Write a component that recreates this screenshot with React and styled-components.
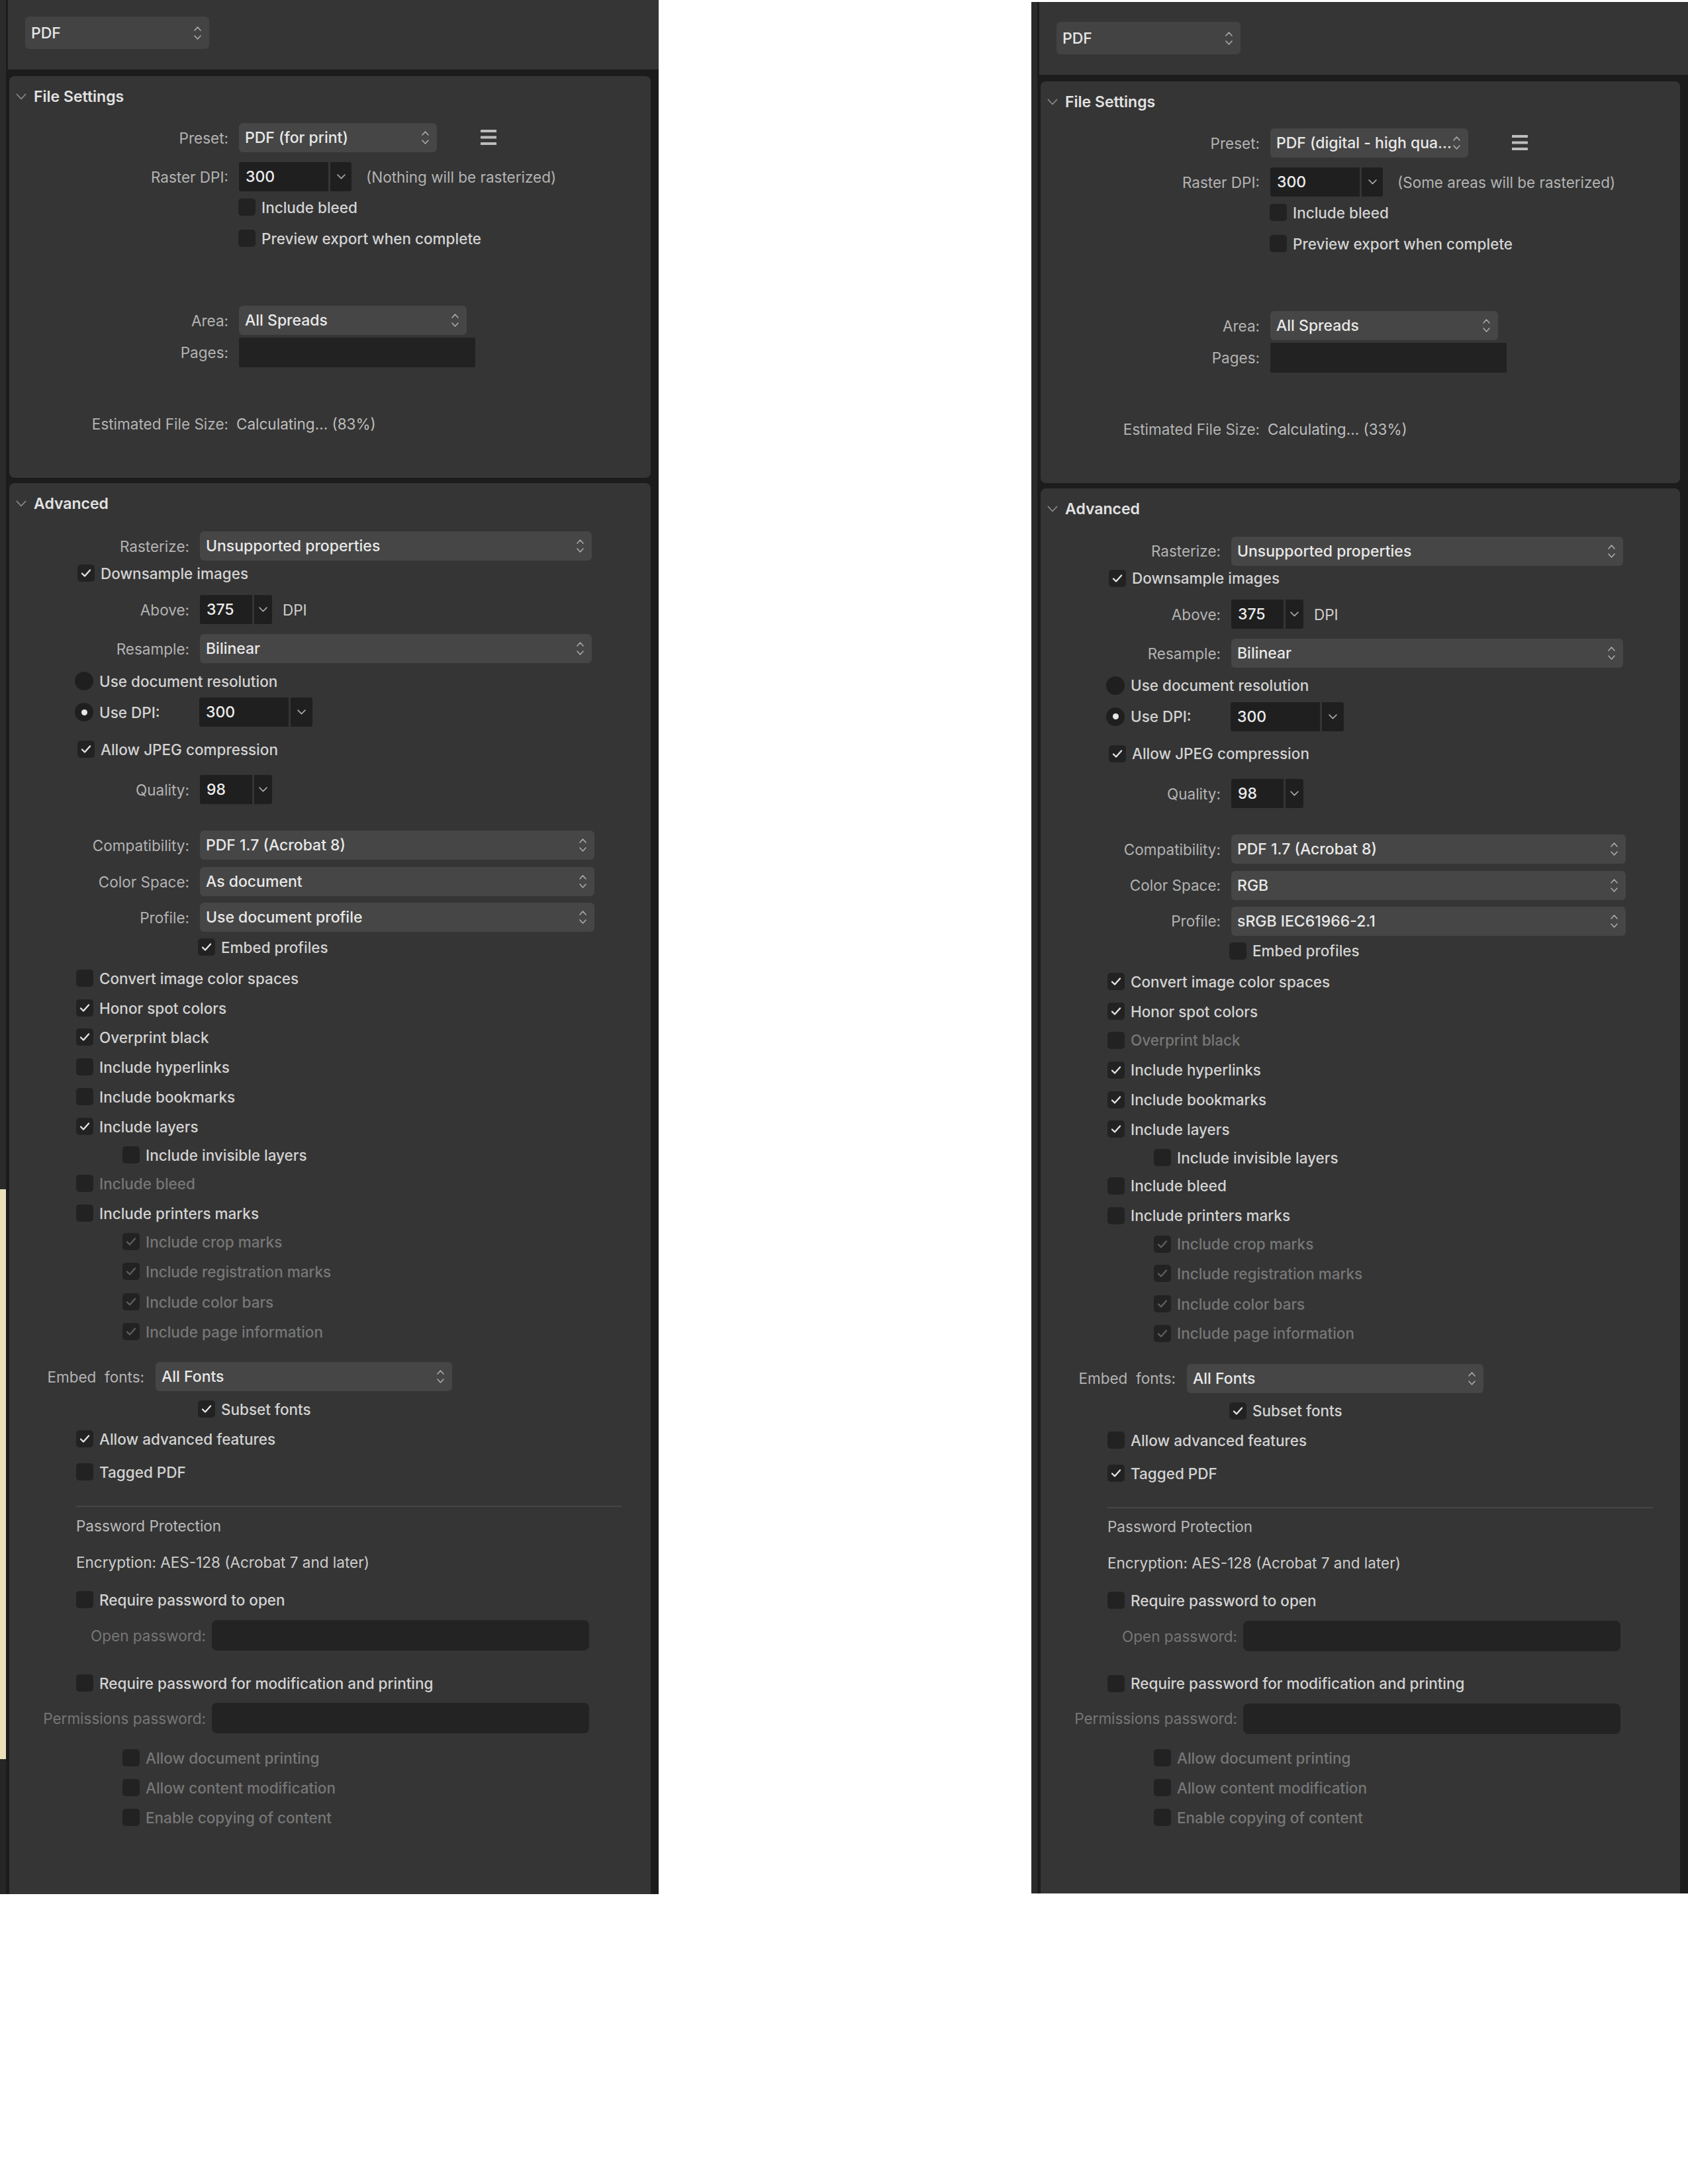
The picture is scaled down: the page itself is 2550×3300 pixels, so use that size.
import React from 'react';
import styled, { createGlobalStyle } from 'styled-components';

const GlobalStyle = createGlobalStyle`
  html, body { margin: 0; padding: 0; background: #ffffff; }
  body { font-family: Inter, "Noto Sans", "Liberation Sans", sans-serif; -webkit-font-smoothing: antialiased; }
  * { box-sizing: border-box; }
`;

const Page = styled.div`
  width: 2550px;
  height: 3300px;
  display: flex;
  justify-content: space-between;
  align-items: flex-start;
  overflow: hidden;
`;

const Panel = styled.div`
  width: ${p => p.$w}px;
  height: ${p => p.$h}px;
  margin-top: ${p => p.$top}px;
  display: flex;
  flex-shrink: 0;
`;

const Strip = styled.div`
  width: 9px;
  flex-shrink: 0;
  background: ${p => p.$bg};
`;

const Body = styled.div`
  flex: 1;
  min-width: 0;
  display: flex;
  flex-direction: column;
  background: #1c1c1c;
  padding-left: 3px;
`;

const Header = styled.div`
  height: ${p => p.$h}px;
  flex-shrink: 0;
  background: #353535;
  padding: ${p => p.$pt}px 0 0 26px;
`;

const FormatSelect = styled.div`
  width: 278px;
  height: 49px;
  border-radius: 6px;
  background: #434343;
  display: flex;
  align-items: center;
  justify-content: space-between;
  padding: 0 11px 0 9px;
  font-size: 23px;
  font-weight: 500;
  color: #e6e6e6;
`;

const Card = styled.section`
  margin: ${p => p.$mt}px 12px 0 2px;
  background: #353535;
  border-radius: ${p => (p.$open ? '8px 8px 0 0' : '8px')};
  display: flex;
  flex-direction: column;
  flex-shrink: 0;
  ${p => (p.$h ? `height: ${p.$h}px;` : 'flex: 1;')}
  overflow: hidden;
`;

const SectionHead = styled.div`
  height: 62px;
  flex-shrink: 0;
  display: flex;
  align-items: center;
  gap: 11px;
  padding-left: 10px;
  font-size: 23px;
  font-weight: 600;
  color: #e2e2e2;
`;

const Row = styled.div`
  height: 40px;
  flex-shrink: 0;
  margin-top: ${p => p.$mt}px;
  padding-left: ${p => p.$indent || 0}px;
  display: flex;
  align-items: center;
  gap: ${p => (p.$gap !== undefined ? p.$gap : 16)}px;
`;

const Label = styled.span`
  width: ${p => p.$w}px;
  flex-shrink: 0;
  text-align: right;
  white-space: pre;
  font-size: 22.5px;
  color: ${p => (p.$disabled ? '#767676' : '#b3b3b3')};
`;

const Value = styled.span`
  font-size: 22.5px;
  color: ${p => p.$color || '#c4c4c4'};
  font-weight: ${p => p.$weight || 400};
  white-space: pre;
`;

const CheckText = styled.span`
  font-size: 22.5px;
  font-weight: 500;
  white-space: nowrap;
  color: ${p => (p.$disabled ? '#777777' : '#d3d3d3')};
`;

const RadioText = styled(CheckText)`
  width: ${p => p.$w}px;
  flex-shrink: 0;
`;

const Box = styled.span`
  width: 26px;
  height: 26px;
  flex-shrink: 0;
  border-radius: 5px;
  background: #222222;
  display: flex;
  align-items: center;
  justify-content: center;
`;

const RadioDot = styled.span`
  width: 28px;
  height: 28px;
  flex-shrink: 0;
  border-radius: 50%;
  background: #1f1f1f;
  display: flex;
  align-items: center;
  justify-content: center;
  &::after {
    content: '';
    width: 9px;
    height: 9px;
    border-radius: 50%;
    background: ${p => (p.$on ? '#e8e8e8' : 'transparent')};
  }
`;

const SelectBox = styled.div`
  width: ${p => p.$w}px;
  height: 44px;
  flex-shrink: 0;
  border-radius: 6px;
  background: #464646;
  display: flex;
  align-items: center;
  justify-content: space-between;
  padding: 0 11px 0 9px;
  font-size: 23px;
  font-weight: 500;
  color: #e8e8e8;
  white-space: nowrap;
`;

const NumBox = styled.div`
  width: ${p => p.$w}px;
  height: 44px;
  flex-shrink: 0;
  display: flex;
  gap: 3px;
`;

const NumText = styled.div`
  flex: 1;
  background: #1f1f1f;
  border-radius: 3px 0 0 3px;
  display: flex;
  align-items: center;
  padding-left: 10px;
  font-size: 23px;
  font-weight: 500;
  color: #ececec;
`;

const NumArrow = styled.div`
  width: ${p => p.$w}px;
  background: #1f1f1f;
  border-radius: 0 3px 3px 0;
  display: flex;
  align-items: center;
  justify-content: center;
`;

const TextField = styled.div`
  width: ${p => p.$w}px;
  height: ${p => p.$h || 45}px;
  flex-shrink: 0;
  background: ${p => p.$bg || '#222222'};
  border-radius: ${p => p.$r || 2}px;
`;

const MenuButton = styled.span`
  margin-left: 50px;
  display: flex;
  align-items: center;
`;

const Divider = styled.div`
  height: 2px;
  flex-shrink: 0;
  margin: ${p => p.$mt}px 0 0 101px;
  width: 824px;
  background: #464646;
`;

const Stepper = () => (
  <svg width="13" height="26" viewBox="0 0 13 26" fill="none" stroke="#ababab" strokeWidth="1.6" strokeLinecap="round" strokeLinejoin="round">
    <path d="M2 9 L6.5 4 L11 9" />
    <path d="M2 17 L6.5 22 L11 17" />
  </svg>
);

const DownChevron = ({ size = 12 }) => (
  <svg width={size} height={size * 0.6} viewBox="0 0 12 7" fill="none" stroke="#a8a8a8" strokeWidth="1.5" strokeLinecap="round" strokeLinejoin="round">
    <path d="M1 1 L6 6 L11 1" />
  </svg>
);

const SectionChevron = () => (
  <svg width="16" height="10" viewBox="0 0 16 10" fill="none" stroke="#8a8a8a" strokeWidth="1.8" strokeLinecap="round" strokeLinejoin="round">
    <path d="M1.5 1.5 L8 8.5 L14.5 1.5" />
  </svg>
);

const MenuIcon = () => (
  <svg width="24" height="24" viewBox="0 0 24 24" fill="#bdbdbd">
    <rect x="0" y="0" width="24" height="4" rx="0.5" />
    <rect x="0" y="9.5" width="24" height="4" rx="0.5" />
    <rect x="0" y="19" width="24" height="4" rx="0.5" />
  </svg>
);

const Check = ({ checked, disabled }) => (
  <Box>
    {checked && (
      <svg width="16" height="14" viewBox="0 0 16 14" fill="none" stroke={disabled ? '#5e5e5e' : '#e4e4e4'} strokeWidth="2.4" strokeLinecap="round" strokeLinejoin="round">
        <path d="M2 7.5 L6 11.5 L14 2.5" />
      </svg>
    )}
  </Box>
);

const Select = ({ w, children }) => (
  <SelectBox $w={w}>
    <span>{children}</span>
    <Stepper />
  </SelectBox>
);

const NumField = ({ w, aw, value }) => (
  <NumBox $w={w}>
    <NumText>{value}</NumText>
    <NumArrow $w={aw}>
      <DownChevron size={13} />
    </NumArrow>
  </NumBox>
);

const FieldRow = ({ mt, w, label, gap, disabled, children }) => (
  <Row $mt={mt} $gap={gap}>
    <Label $w={w} $disabled={disabled}>{label}</Label>
    {children}
  </Row>
);

const CheckRow = ({ mt, indent, checked, disabled, children }) => (
  <Row $mt={mt} $indent={indent} $gap={9}>
    <Check checked={checked} disabled={disabled} />
    <CheckText $disabled={disabled}>{children}</CheckText>
  </Row>
);

const L1 = 331;
const L2 = 272;
const MAIN = 101;
const SUB = 171;

const ExportPanel = ({ cfg }) => {
  const m = v => v - cfg.sq;
  return (
    <Panel $w={cfg.width} $h={cfg.height} $top={cfg.top}>
      <Strip $bg={cfg.strip} />
      <Body>
        <Header $h={cfg.headerH} $pt={cfg.headerPad}>
          <FormatSelect>
            <span>PDF</span>
            <Stepper />
          </FormatSelect>
        </Header>

        <Card $mt={10} $h={607}>
          <SectionHead>
            <SectionChevron />
            <span>File Settings</span>
          </SectionHead>
          <FieldRow mt={11} w={L1} label="Preset:">
            <Select w={299}>{cfg.preset}</Select>
            <MenuButton>
              <MenuIcon />
            </MenuButton>
          </FieldRow>
          <FieldRow mt={19} w={L1} label="Raster DPI:">
            <NumField w={170} aw={32} value="300" />
            <Value $color="#b3b3b3" style={{ marginLeft: 6 }}>{cfg.rasterNote}</Value>
          </FieldRow>
          <CheckRow mt={6} indent={346}>Include bleed</CheckRow>
          <CheckRow mt={7} indent={346}>Preview export when complete</CheckRow>
          <FieldRow mt={84} w={L1} label="Area:">
            <Select w={344}>All Spreads</Select>
          </FieldRow>
          <FieldRow mt={8} w={L1} label="Pages:">
            <TextField $w={357} />
          </FieldRow>
          <FieldRow mt={68} w={L1} label="Estimated File Size:" gap={12}>
            <Value $color="#bdbdbd">{cfg.estimate}</Value>
          </FieldRow>
        </Card>

        <Card $mt={8} $open>
          <SectionHead>
            <SectionChevron />
            <span>Advanced</span>
          </SectionHead>
          <FieldRow mt={m(13)} w={L2} label="Rasterize:">
            <Select w={592}>Unsupported properties</Select>
          </FieldRow>
          <CheckRow mt={m(1)} indent={103} checked>Downsample images</CheckRow>
          <FieldRow mt={m(15)} w={L2} label="Above:">
            <NumField w={109} aw={27} value="375" />
            <Value $color="#cfcfcf">DPI</Value>
          </FieldRow>
          <FieldRow mt={m(19)} w={L2} label="Resample:">
            <Select w={592}>Bilinear</Select>
          </FieldRow>
          <Row $mt={m(9)} $indent={99} $gap={9}>
            <RadioDot />
            <CheckText>Use document resolution</CheckText>
          </Row>
          <Row $mt={m(7)} $indent={99} $gap={9}>
            <RadioDot $on />
            <RadioText $w={142}>Use DPI:</RadioText>
            <NumField w={171} aw={33} value="300" />
          </Row>
          <CheckRow mt={m(16)} indent={103} checked>Allow JPEG compression</CheckRow>
          <FieldRow mt={m(21)} w={L2} label="Quality:">
            <NumField w={109} aw={27} value="98" />
          </FieldRow>
          <FieldRow mt={m(44)} w={L2} label="Compatibility:">
            <Select w={596}>PDF 1.7 (Acrobat 8)</Select>
          </FieldRow>
          <FieldRow mt={m(15)} w={L2} label="Color Space:">
            <Select w={596}>{cfg.colorSpace}</Select>
          </FieldRow>
          <FieldRow mt={m(14)} w={L2} label="Profile:">
            <Select w={596}>{cfg.profile}</Select>
          </FieldRow>
          {cfg.checks.map((c, i) => (
            <CheckRow key={i} mt={m(c.mt)} indent={c.indent} checked={c.on} disabled={c.off}>
              {c.text}
            </CheckRow>
          ))}
          <FieldRow mt={m(28)} w={204} label="Embed  fonts:" gap={17}>
            <Select w={448}>All Fonts</Select>
          </FieldRow>
          {cfg.checks2.map((c, i) => (
            <CheckRow key={i} mt={m(c.mt)} indent={c.indent} checked={c.on} disabled={c.off}>
              {c.text}
            </CheckRow>
          ))}
          <Divider $mt={m(31)} />
          <Row $mt={m(8)} $indent={MAIN}>
            <Value $color="#bababa">Password Protection</Value>
          </Row>
          <Row $mt={m(15)} $indent={MAIN}>
            <Value $color="#cdcdcd">Encryption: AES-128 (Acrobat 7 and later)</Value>
          </Row>
          <CheckRow mt={m(17)} indent={MAIN}>Require password to open</CheckRow>
          <FieldRow mt={m(14)} w={297} label="Open password:" gap={9} disabled>
            <TextField $w={570} $h={46} $bg="#232323" $r={8} />
          </FieldRow>
          <CheckRow mt={m(32)} indent={MAIN}>Require password for modification and printing</CheckRow>
          <FieldRow mt={m(13)} w={297} label="Permissions password:" gap={9} disabled>
            <TextField $w={570} $h={46} $bg="#232323" $r={8} />
          </FieldRow>
          <CheckRow mt={m(20)} indent={SUB} disabled>Allow document printing</CheckRow>
          <CheckRow mt={m(5)} indent={SUB} disabled>Allow content modification</CheckRow>
          <CheckRow mt={m(5)} indent={SUB} disabled>Enable copying of content</CheckRow>
        </Card>
      </Body>
    </Panel>
  );
};

const mkChecks = s => [
  { mt: 5, indent: 285, text: 'Embed profiles', on: s.embed },
  { mt: 7, indent: MAIN, text: 'Convert image color spaces', on: s.convert },
  { mt: 5, indent: MAIN, text: 'Honor spot colors', on: true },
  { mt: 4, indent: MAIN, text: 'Overprint black', on: s.overprint, off: s.overprintOff },
  { mt: 5, indent: MAIN, text: 'Include hyperlinks', on: s.links },
  { mt: 5, indent: MAIN, text: 'Include bookmarks', on: s.marks },
  { mt: 5, indent: MAIN, text: 'Include layers', on: true },
  { mt: 3, indent: SUB, text: 'Include invisible layers' },
  { mt: 3, indent: MAIN, text: 'Include bleed', off: s.bleedOff },
  { mt: 5, indent: MAIN, text: 'Include printers marks' },
  { mt: 3, indent: SUB, text: 'Include crop marks', on: true, off: true },
  { mt: 5, indent: SUB, text: 'Include registration marks', on: true, off: true },
  { mt: 6, indent: SUB, text: 'Include color bars', on: true, off: true },
  { mt: 5, indent: SUB, text: 'Include page information', on: true, off: true },
];

const mkChecks2 = s => [
  { mt: 9, indent: 285, text: 'Subset fonts', on: true },
  { mt: 5, indent: MAIN, text: 'Allow advanced features', on: s.advanced },
  { mt: 10, indent: MAIN, text: 'Tagged PDF', on: s.tagged },
];

const leftCfg = {
  width: 995,
  height: 2862,
  top: 0,
  sq: 0,
  strip: 'linear-gradient(to bottom, #2b2b2b 0px, #2b2b2b 1797px, #ece0bb 1797px, #ece0bb 2658px, #262626 2658px)',
  headerH: 105,
  headerPad: 25,
  preset: 'PDF (for print)',
  rasterNote: '(Nothing will be rasterized)',
  estimate: 'Calculating... (83%)',
  colorSpace: 'As document',
  profile: 'Use document profile',
  checks: mkChecks({ embed: true, convert: false, overprint: true, overprintOff: false, links: false, marks: false, bleedOff: true }),
  checks2: mkChecks2({ advanced: true, tagged: false }),
};

const rightCfg = {
  width: 992,
  height: 2858,
  top: 3,
  sq: 0.2,
  strip: '#2a2a2a',
  headerH: 110,
  headerPad: 30,
  preset: 'PDF (digital - high qua…',
  rasterNote: '(Some areas will be rasterized)',
  estimate: 'Calculating... (33%)',
  colorSpace: 'RGB',
  profile: 'sRGB IEC61966-2.1',
  checks: mkChecks({ embed: false, convert: true, overprint: false, overprintOff: true, links: true, marks: true, bleedOff: false }),
  checks2: mkChecks2({ advanced: false, tagged: true }),
};

export default function App() {
  return (
    <>
      <GlobalStyle />
      <Page>
        <ExportPanel cfg={leftCfg} />
        <ExportPanel cfg={rightCfg} />
      </Page>
    </>
  );
}
